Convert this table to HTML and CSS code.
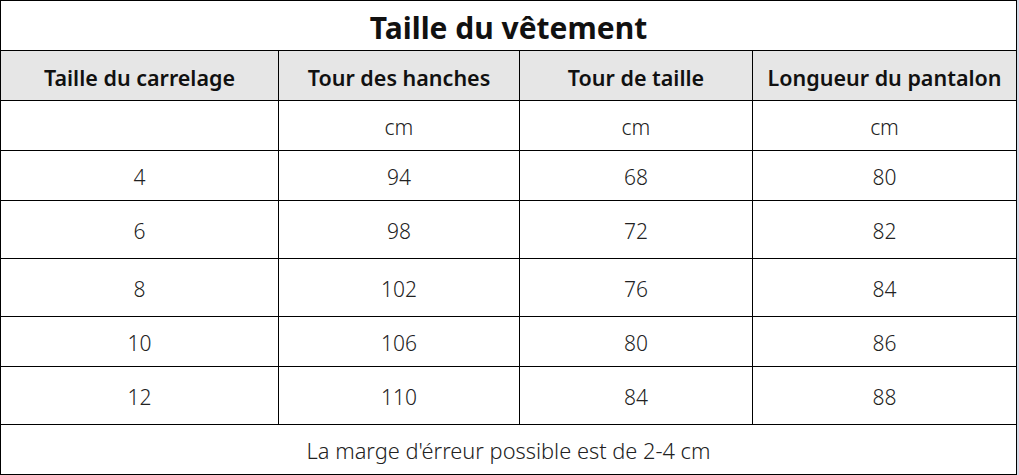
FILE: index.html
```html
<!DOCTYPE html>
<html lang="fr">
<head>
<meta charset="utf-8">
<title>Taille du vêtement</title>
<link rel="stylesheet" href="styles.css">
</head>
<body>
<div class="page">
<table class="size-table">
  <colgroup>
    <col class="c1"><col class="c2"><col class="c3"><col class="c4">
  </colgroup>
  <tr class="r-title"><td colspan="4" class="title">Taille du vêtement</td></tr>
  <tr class="r-head">
    <th>Taille du carrelage</th>
    <th>Tour des hanches</th>
    <th>Tour de taille</th>
    <th>Longueur du pantalon</th>
  </tr>
  <tr class="r50"><td></td><td>cm</td><td>cm</td><td>cm</td></tr>
  <tr class="r50"><td>4</td><td>94</td><td>68</td><td>80</td></tr>
  <tr class="r58"><td>6</td><td>98</td><td>72</td><td>82</td></tr>
  <tr class="r58"><td>8</td><td>102</td><td>76</td><td>84</td></tr>
  <tr class="r50"><td>10</td><td>106</td><td>80</td><td>86</td></tr>
  <tr class="r58"><td>12</td><td>110</td><td>84</td><td>88</td></tr>
  <tr class="r50"><td colspan="4" class="note">La marge d'érreur possible est de 2-4 cm</td></tr>
</table>
<div class="edge"></div>
</div>
</body>
</html>
```
FILE: styles.css
```css
html, body {
  margin: 0;
  padding: 0;
  background: #ffffff;
}
.page {
  display: flex;
  align-items: flex-start;
  width: 1019px;
  height: 475px;
}
.edge {
  width: 3px;
  height: 475px;
  background: #d3d9e6;
}
.size-table {
  border-collapse: collapse;
  table-layout: fixed;
  width: 1016px;
  font-family: "Noto Sans", "Open Sans", sans-serif;
  color: #222222;
}
.c1 { width: 278px; }
.c2 { width: 241px; }
.c3 { width: 233px; }
.c4 { width: 264px; }
.size-table td, .size-table th {
  border: 1px solid #000000;
  text-align: center;
  vertical-align: middle;
  padding: 4px 0 0 0;
  font-size: 21px;
  font-weight: 300;
  line-height: 1.2;
}
.r-title { height: 50px; }
.size-table .title {
  font-size: 30px;
  font-weight: 700;
  color: #111111;
}
.r-head { height: 50px; }
.size-table .r-head th {
  background: #e6e6e6;
  font-weight: 600;
  font-size: 21.5px;
  color: #111111;
}
.r50 { height: 50px; }
.r58 { height: 58px; }
.size-table .note {
  font-size: 21.8px;
}
```
